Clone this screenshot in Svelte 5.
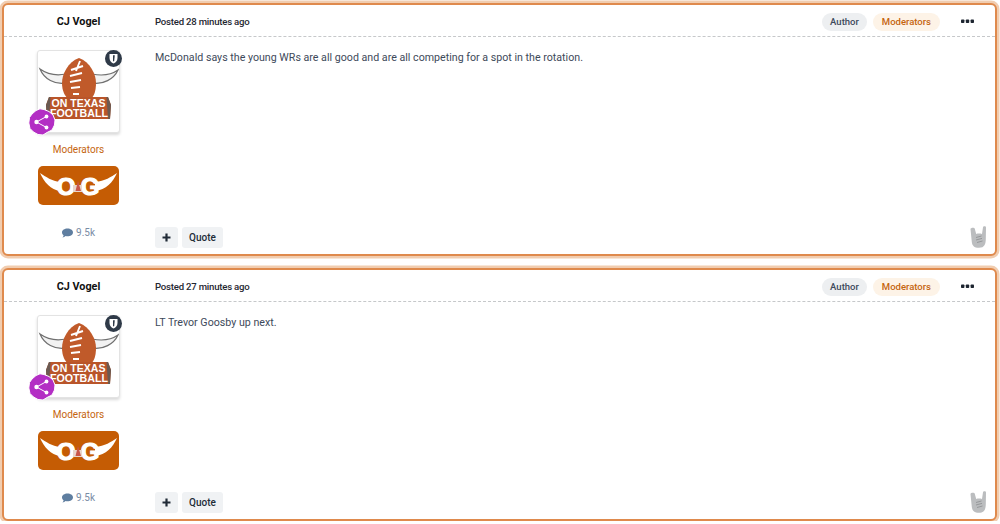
<script>
	const posts = [
		{ id: 1, time: '28 minutes ago', text: 'McDonald says the young WRs are all good and are all competing for a spot in the rotation.' },
		{ id: 2, time: '27 minutes ago', text: 'LT Trevor Goosby up next.' }
	];
</script>

<main class="feed">
	{#each posts as post (post.id)}
		<article class="post">
			<header class="post-head">
				<h3 class="author">CJ Vogel</h3>
				<div class="posted">Posted {post.time}</div>
				<span class="badge author-badge">Author</span>
				<span class="badge mod-badge">Moderators</span>
				<button class="more" aria-label="More options">
					<svg width="13" height="5" viewBox="0 0 13 5"><rect x="0" y="0.5" width="3.4" height="3.6" rx="0.8" /><rect x="4.8" y="0.5" width="3.4" height="3.6" rx="0.8" /><rect x="9.6" y="0.5" width="3.4" height="3.6" rx="0.8" /></svg>
				</button>
			</header>
			<div class="post-body">
				<aside class="side">
					<div class="avatar">
						<svg width="81" height="81" viewBox="0 0 81 81">
							<path d="M2 18 C9 23 18 25 28 23 L28 32 C17 34 6 28 2 18Z" fill="#f2f2f2" stroke="#6f6f6f" stroke-width="1.2" />
							<path d="M80 19 C73 24 64 25 54 23 L54 32 C65 34 76 28 80 19Z" fill="#f2f2f2" stroke="#6f6f6f" stroke-width="1.2" />
							<path d="M41 7 C30 11 24 23 24 32 C24 40 27 45 30 48 L53 48 C56 45 58 40 58 32 C58 23 52 11 41 7Z" fill="#c05a2a" />
							<path d="M42 10 L38 20 M33 19 L45 15 M32 25 L44 22 M32 31 L43 29 M33 37 L42 36 M35 43 L41 43" stroke="#fff" stroke-width="1.9" fill="none" />
							<path d="M11 46 L70 46 L73 54 L72 68 L9 68 L8 54Z" fill="#b9552a" />
							<path d="M9 68 L8 54 L11 46 L12.5 46 L11 68Z M72 68 L73 54 L70 46 L68.5 46 L70 68Z" fill="#6a5a52" />
							<text x="40.5" y="55.5" class="logo-text" textLength="54" lengthAdjust="spacingAndGlyphs">ON TEXAS</text>
							<text x="41" y="66" class="logo-text" textLength="58" lengthAdjust="spacingAndGlyphs">FOOTBALL</text>
						</svg>
						<span class="shield">
							<svg width="9" height="11" viewBox="0 0 9 11"><path d="M0.5 1 L8.5 1 L8.5 5 C8.5 8 6.5 9.7 4.5 10.5 C2.5 9.7 0.5 8 0.5 5Z" fill="#fff" /><path d="M4 2.2 L5.8 2.2 L5.2 8 L4 8.4Z" fill="#2f3a48" /></svg>
						</span>
						<span class="rank">
							<svg width="28" height="28" viewBox="0 0 28 28">
								<path d="M12 0.8 L16 1.5 L21 3.5 L25 7 L27 12 L26.5 17 L24 22 L19 24.5 L15 27 L10 26.5 L5.5 24 L2 20.5 L0.8 15 L1.5 9.5 L4 6 L8 2.5Z" fill="#b32ec4" stroke="#fff" stroke-width="1" />
								<path d="M8.5 14 L18.5 8.5 M8.5 14 L18.5 19.5" stroke="#fff" stroke-width="1" />
								<circle cx="8.5" cy="14" r="2.2" fill="#fff" /><circle cx="18.5" cy="8.5" r="1.9" fill="#fff" /><circle cx="18.5" cy="19.5" r="1.9" fill="#fff" />
							</svg>
						</span>
					</div>
					<div class="group">Moderators</div>
					<div class="og">
						<svg width="81" height="39" viewBox="0 0 81 39">
							<path d="M2 7 C8 11 14 15 22 16 L22 25 C13 24 6 16 2 7Z" fill="#fff" />
							<path d="M79 7 C73 11 67 15 57 16 L57 25 C68 24 75 16 79 7Z" fill="#fff" />
							<text x="28" y="29" class="og-text">O</text>
							<text x="52" y="29" class="og-text">G</text>
							<rect x="35" y="19" width="9" height="7" fill="#e8d6cc" />
							<path d="M37.5 25 L40 15 L43 25Z" fill="#c9574a" />
						</svg>
					</div>
					<div class="count">
						<svg width="11" height="10" viewBox="0 0 11 10"><path d="M5.5 0.5 C8.5 0.5 11 2.2 11 4.4 C11 6.6 8.5 8.3 5.5 8.3 C4.8 8.3 4.2 8.2 3.6 8.1 C2.8 8.9 1.6 9.4 0.4 9.5 C1.1 8.8 1.5 8 1.6 7.2 C0.6 6.5 0 5.5 0 4.4 C0 2.2 2.5 0.5 5.5 0.5Z" fill="#5f7ea0" /></svg>
						9.5k
					</div>
				</aside>
				<div class="content">
					<p>{post.text}</p>
					<div class="actions">
						<button class="btn plus" aria-label="Add reaction">
							<svg width="9" height="9" viewBox="0 0 9 9"><path d="M4.5 0.5 V8.5 M0.5 4.5 H8.5" stroke="#222c38" stroke-width="2.2" /></svg>
						</button>
						<button class="btn">Quote</button>
						<span class="rock">
							<svg width="17" height="22" viewBox="0 0 17 22">
								<path d="M0.5 3 C0.4 1.6 4.4 1 4.7 2.6 L6.2 8 C8 7.4 10 7.4 12 8 L13 1.2 C13.2 0 16 0 16 1.4 L15.8 13 C15.7 18 14.6 21.8 9 21.8 C4 21.8 2.2 19.5 1.8 16 Z" fill="#bbbdbf" />
								<path d="M6 11.5 L11.5 10 M6 14 L12 12.4 M7 16.5 L12.5 15" stroke="#96989a" stroke-width="1" fill="none" />
							</svg>
						</span>
					</div>
				</div>
			</div>
		</article>
	{/each}
</main>

<style>
	:global(body) {
		margin: 0;
		background: #fff;
		font-family: Roboto, 'Open Sans', sans-serif;
	}

	.feed {
		display: flex;
		flex-direction: column;
		gap: 12px;
		padding: 3px 3px 0 2px;
		width: 1000px;
		box-sizing: border-box;
	}

	.post {
		box-sizing: border-box;
		height: 253px;
		border: 2px solid #df8a4d;
		border-radius: 6px;
		box-shadow: 0 0 0 2.5px #f1cdb0;
		background: #fff;
		display: flex;
		flex-direction: column;
	}

	.post-head {
		display: flex;
		align-items: center;
		height: 32px;
		padding-top: 2px;
		border-bottom: 1px dashed #c6c8ca;
		flex: none;
		box-sizing: border-box;
	}

	.author {
		width: 151px;
		padding-right: 2px;
		box-sizing: border-box;
		margin: 0;
		font-size: 10.8px;
		font-weight: 700;
		text-align: center;
		color: #111;
	}

	.posted {
		font-size: 9.6px;
		font-weight: 500;
		letter-spacing: -0.22px;
		color: #1f2731;
		flex: 1;
	}

	.badge {
		font-size: 9.5px;
		font-weight: 500;
		line-height: 18px;
		border-radius: 9px;
	}

	.author-badge {
		background: #edeff1;
		color: #3d4a5c;
		margin-right: 6px;
		padding: 0 8px;
	}

	.mod-badge {
		background: #fdf3e7;
		color: #c5650f;
		padding: 0 9px;
	}

	.more {
		border: 0;
		background: none;
		padding: 0;
		margin: 0 21px 0 21px;
		display: flex;
	}

	.more svg {
		fill: #1d2530;
	}

	.post-body {
		flex: 1;
		display: flex;
		min-height: 0;
	}

	.side {
		width: 151px;
		padding-right: 2px;
		flex: none;
		display: flex;
		flex-direction: column;
		align-items: center;
		padding-top: 13px;
		box-sizing: border-box;
	}

	.avatar {
		position: relative;
		width: 81px;
		height: 81px;
		background: #fff;
		border: 1px solid #e3e3e3;
		border-radius: 3px;
		box-shadow: 0 2px 3px rgba(0, 0, 0, 0.15);
	}

	.shield {
		position: absolute;
		top: -1px;
		right: -3px;
		width: 17px;
		height: 17px;
		border-radius: 50%;
		background: #2f3a48;
		display: flex;
		align-items: center;
		justify-content: center;
	}

	.rank {
		position: absolute;
		left: -10px;
		bottom: -4px;
		width: 28px;
		height: 28px;
	}

	.logo-text {
		font-family: 'Liberation Sans', sans-serif;
		font-size: 11.5px;
		font-weight: 700;
		fill: #fff;
		text-anchor: middle;
	}

	.og-text {
		font-family: 'Liberation Sans', sans-serif;
		font-size: 24px;
		font-weight: 700;
		fill: #fff;
		stroke: #fff;
		stroke-width: 1.2px;
		text-anchor: middle;
	}

	.group {
		font-size: 10px;
		color: #c5650f;
		margin-top: 11px;
	}

	.og {
		width: 81px;
		height: 39px;
		margin-top: 11px;
		background: #c55c04;
		border-radius: 5px;
	}

	.count {
		margin-top: 22px;
		font-size: 10px;
		color: #7a8ca5;
		display: flex;
		align-items: center;
		gap: 3px;
	}

	.content {
		flex: 1;
		display: flex;
		flex-direction: column;
		padding: 14px 8px 6px 0;
		min-width: 0;
	}

	.content p {
		margin: 0;
		font-size: 10.67px;
		color: #3e4a5a;
		flex: 1;
	}

	.actions {
		display: flex;
		align-items: center;
		gap: 4px;
	}

	.btn {
		height: 21px;
		min-width: 23px;
		padding: 0 7px;
		border: 0;
		border-radius: 3px;
		background: #f0f2f4;
		font-family: inherit;
		font-size: 10px;
		font-weight: 500;
		color: #222c38;
		display: flex;
		align-items: center;
		justify-content: center;
	}

	.rock {
		margin-left: auto;
		display: flex;
	}
</style>
